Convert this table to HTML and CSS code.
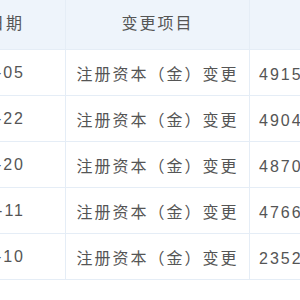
FILE: index.html
```html
<!DOCTYPE html>
<html lang="zh">
<head>
<meta charset="utf-8">
<link rel="stylesheet" href="styles.css">
</head>
<body>
<div class="wrap">
<table class="tbl">
  <colgroup><col class="k1"><col class="k2"><col class="k3"></colgroup>
  <thead>
    <tr><th class="c1">变更日期</th><th class="c2">变更项目</th><th class="c3">变更前</th></tr>
  </thead>
  <tbody>
    <tr><td class="c1">2019-08-05</td><td class="c2">注册资本（金）变更</td><td class="c3">4915.2万元人民币</td></tr>
    <tr><td class="c1">2019-04-22</td><td class="c2">注册资本（金）变更</td><td class="c3">4904.6万元人民币</td></tr>
    <tr><td class="c1">2018-12-20</td><td class="c2">注册资本（金）变更</td><td class="c3">4870.0万元人民币</td></tr>
    <tr><td class="c1">2018-06-11</td><td class="c2">注册资本（金）变更</td><td class="c3">4766.3万元人民币</td></tr>
    <tr><td class="c1">2017-11-10</td><td class="c2">注册资本（金）变更</td><td class="c3">2352.0万元人民币</td></tr>
  </tbody>
</table>
</div>
</body>
</html>
```
FILE: styles.css
```css
html, body {
  margin: 0;
  padding: 0;
  background: #fff;
  overflow: hidden;
}
.wrap {
  width: 300px;
  height: 300px;
  overflow: hidden;
}
.tbl {
  border-collapse: collapse;
  table-layout: fixed;
  width: 700px;
  margin-left: -102px;
  font-family: "Liberation Sans", "Noto Sans CJK SC", sans-serif;
  font-size: 16px;
  color: #555;
}
.k1 { width: 167px; }
.k2 { width: 184px; }
.tbl th, .tbl td {
  border: 1px solid #e5edf6;
  padding: 0;
  text-align: center;
  white-space: nowrap;
  overflow: hidden;
  letter-spacing: 2px;
}
.tbl th {
  background: #eef4fb;
  height: 44px;
  padding-bottom: 5px;
  font-weight: normal;
  border-top: none;
}
.tbl td {
  height: 45px;
}
.tbl .c1 {
  text-align: right;
  padding-right: 41px;
}
.tbl td.c1 {
  padding-right: 40px;
}
.tbl td.c3 {
  text-align: left;
  padding-left: 9px;
}
```
